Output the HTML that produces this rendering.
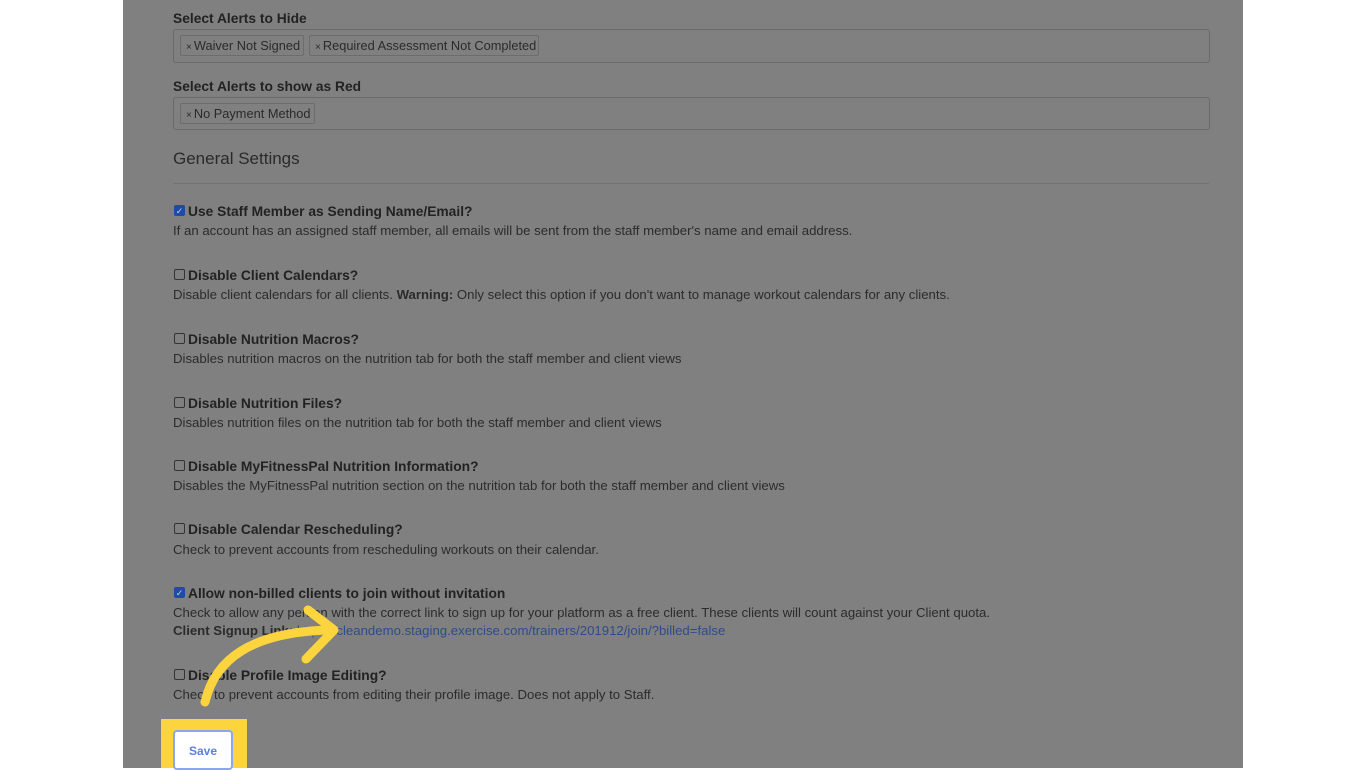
<!DOCTYPE html>
<html><head><meta charset="utf-8"><style>
body{margin:0;width:1366px;height:768px;background:#fff;font-family:"Liberation Sans",Arial,sans-serif;overflow:hidden;position:relative}
#pg{position:absolute;left:123px;top:0;width:1120px;height:768px;background:#808080}
.a{position:absolute;white-space:nowrap;color:#222}
.lbl{font-weight:bold;font-size:13.8px}
.box{position:absolute;left:173px;width:1035px;border:1px solid #6a6a6a;border-radius:3px;height:31px}
.tag{position:absolute;top:5px;height:21px;border:1px solid #6c6c6c;border-radius:2px;font-size:12.8px;line-height:20px;padding:0 5px;color:#2a2a2a;box-sizing:border-box;white-space:nowrap;overflow:hidden}
.tag b{font-weight:normal;font-size:10px;margin-right:2px}
.desc{font-size:13.2px;color:#2b2b2b}
.cb{position:absolute;left:174px;width:11px;height:11px;border:1px solid #333;border-radius:2px;box-sizing:border-box}
.cb.on{background:#1e4aa8;border-color:#1e4aa8;color:#ccd;font-size:9px;line-height:10px;text-align:center}
</style></head><body>
<div id="pg"></div>
<div class="a lbl" style="left:173px;top:11px">Select Alerts to Hide</div>
<div class="box" style="top:29px;height:32px"><div class="tag" style="left:6px;width:124px"><b>×</b>Waiver Not Signed</div><div class="tag" style="left:135px;width:230px"><b>×</b>Required Assessment Not Completed</div></div>
<div class="a lbl" style="left:173px;top:79px">Select Alerts to show as Red</div>
<div class="box" style="top:97px"><div class="tag" style="left:6px;width:135px"><b>×</b>No Payment Method</div></div>
<div class="a" style="left:173px;top:149px;font-size:17px;color:#2a2a2a">General Settings</div>
<div style="position:absolute;left:173px;top:183px;width:1036px;height:1px;background:#727272"></div>

<div class="cb on" style="top:205px">✓</div><div class="a lbl" style="left:188px;top:204px">Use Staff Member as Sending Name/Email?</div>
<div class="a desc" style="left:173px;top:223px">If an account has an assigned staff member, all emails will be sent from the staff member's name and email address.</div>

<div class="cb" style="top:269px"></div><div class="a lbl" style="left:188px;top:268px">Disable Client Calendars?</div>
<div class="a desc" style="left:173px;top:287px">Disable client calendars for all clients. <b>Warning:</b> Only select this option if you don't want to manage workout calendars for any clients.</div>

<div class="cb" style="top:333px"></div><div class="a lbl" style="left:188px;top:332px">Disable Nutrition Macros?</div>
<div class="a desc" style="left:173px;top:351px">Disables nutrition macros on the nutrition tab for both the staff member and client views</div>

<div class="cb" style="top:397px"></div><div class="a lbl" style="left:188px;top:396px">Disable Nutrition Files?</div>
<div class="a desc" style="left:173px;top:415px">Disables nutrition files on the nutrition tab for both the staff member and client views</div>

<div class="cb" style="top:460px"></div><div class="a lbl" style="left:188px;top:459px">Disable MyFitnessPal Nutrition Information?</div>
<div class="a desc" style="left:173px;top:478px">Disables the MyFitnessPal nutrition section on the nutrition tab for both the staff member and client views</div>

<div class="cb" style="top:523px"></div><div class="a lbl" style="left:188px;top:522px">Disable Calendar Rescheduling?</div>
<div class="a desc" style="left:173px;top:542px">Check to prevent accounts from rescheduling workouts on their calendar.</div>

<div class="cb on" style="top:587px">✓</div><div class="a lbl" style="left:188px;top:586px">Allow non-billed clients to join without invitation</div>
<div class="a desc" style="left:173px;top:605px">Check to allow any person with the correct link to sign up for your platform as a free client. These clients will count against your Client quota.</div>
<div class="a desc" style="left:173px;top:623px"><b>Client Signup Link:</b> <span style="color:#2c4b8e">https://cleandemo.staging.exercise.com/trainers/201912/join/?billed=false</span></div>

<div class="cb" style="top:669px"></div><div class="a lbl" style="left:188px;top:668px">Disable Profile Image Editing?</div>
<div class="a desc" style="left:173px;top:687px">Check to prevent accounts from editing their profile image. Does not apply to Staff.</div>

<div style="position:absolute;left:161px;top:719px;width:86px;height:49px;background:#fcd43e"></div>
<div style="position:absolute;left:173px;top:730px;width:60px;height:40px;background:#fff;border:2px solid #8aa6f0;border-radius:4px;box-sizing:border-box;color:#5a7fe0;font-size:12px;font-weight:bold;text-align:center;line-height:38px">Save</div>

<svg style="position:absolute;left:0;top:0" width="1366" height="768">
<path d="M205 702 C215 660 250 632 330 630" fill="none" stroke="#fcd43e" stroke-width="9" stroke-linecap="round"/>
<path d="M308 610 L334 630 L306 659" fill="none" stroke="#fcd43e" stroke-width="9" stroke-linecap="round" stroke-linejoin="round"/>
</svg>
</body></html>
